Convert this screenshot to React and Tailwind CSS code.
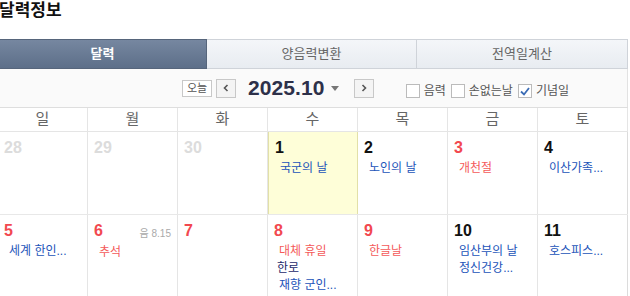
import React from "react";

const font = "font-['Liberation_Sans','Noto_Sans_CJK_KR',sans-serif]";

const weekdays = ["일", "월", "화", "수", "목", "금", "토"];

const weeks = [
  [
    { day: 28, muted: true },
    { day: 29, muted: true },
    { day: 30, muted: true },
    { day: 1, today: true, events: [{ text: "국군의 날" }] },
    { day: 2, events: [{ text: "노인의 날" }] },
    { day: 3, red: true, events: [{ text: "개천절", red: true }] },
    { day: 4, events: [{ text: "이산가족..." }] },
  ],
  [
    { day: 5, red: true, events: [{ text: "세계 한인..." }] },
    { day: 6, red: true, lunar: "8.15", events: [{ text: "추석", red: true }] },
    { day: 7, red: true },
    {
      day: 8,
      red: true,
      events: [
        { text: "대체 휴일", red: true },
        { text: "한로", plain: true },
        { text: "재향 군인..." },
      ],
    },
    { day: 9, red: true, events: [{ text: "한글날", red: true }] },
    { day: 10, events: [{ text: "임산부의 날" }, { text: "정신건강..." }] },
    { day: 11, events: [{ text: "호스피스..." }] },
  ],
];

function Checkbox({ label, checked }) {
  return (
    <label className="flex items-center gap-[4px] text-[12px] text-[#555]">
      <span className="flex h-[14px] w-[14px] items-center justify-center border border-[#bbb] bg-white">
        {checked && (
          <svg width="10" height="9" viewBox="0 0 10 9">
            <path d="M1 4.5 L4 7.5 L9 1" fill="none" stroke="#3b6cb5" strokeWidth="1.8" />
          </svg>
        )}
      </span>
      {label}
    </label>
  );
}

function DayCell({ cell, last }) {
  const numColor = cell.muted
    ? "text-[#dcdcdc]"
    : cell.red
    ? "text-[#f2484f]"
    : "text-[#111]";
  return (
    <div
      className={`h-[82px] border-r border-[#e5e5e5] pl-[6px] pt-[7px] ${
        cell.today ? "bg-[#fefed8] border-l border-l-[#e2e0a8] border-r-[#e2e0a8]" : ""
      } ${last ? "border-r-[#dcdcdc]" : ""}`}
    >
      <div className="flex items-start justify-between pr-[6px]">
        <span className={`text-[16px] font-bold leading-[18px] ${numColor}`}>{cell.day}</span>
        {cell.lunar && (
          <span className="mt-[4px] text-[10px] text-[#aaa]">
            음 <span className="text-[10px]">{cell.lunar}</span>
          </span>
        )}
      </div>
      <div className="mt-[3px] flex flex-col">
        {cell.events?.map((e, i) => (
          <span
            key={i}
            className={`text-[12px] leading-[17px] ${
              e.plain ? "pl-[3px]" : "pl-[5px]"
            } ${e.red ? "text-[#f45a5a]" : e.plain ? "text-[#1d2a6b]" : "text-[#2253b9]"}`}
          >
            {e.text}
          </span>
        ))}
      </div>
    </div>
  );
}

export default function App() {
  return (
    <div className={`h-[296px] w-[630px] overflow-hidden bg-white ${font}`}>
      <div className="ml-[-2px] w-[630px]">
        <h1 className="ml-[1px] pt-[1px] text-[17px] font-bold leading-[20px] text-[#111]">달력정보</h1>

        <div className="mt-[18px] flex h-[30px] w-[630px] border-r border-[#cfd3d9]">
          <div className="flex w-[209px] items-center justify-center border border-[#56657b] bg-gradient-to-b from-[#7687a0] to-[#5d6f89] text-[13px] font-bold text-white">
            달력
          </div>
          <div className="flex w-[210px] items-center justify-center border-y border-r border-[#cfd3d9] bg-gradient-to-b from-[#f4f6f9] to-[#e8ecf1] text-[13px] text-[#666]">
            양음력변환
          </div>
          <div className="flex flex-1 items-center justify-center border-y border-[#cfd3d9] bg-gradient-to-b from-[#f4f6f9] to-[#e8ecf1] text-[13px] text-[#666]">
            전역일계산
          </div>
        </div>

        <div className="flex h-[38px] w-[630px] items-center border-r border-[#e2e2e2] bg-[#fafafa] pl-[184px]">
          <button className="h-[17px] w-[30px] border border-[#c8c8c8] bg-white text-[11px] leading-[15px] text-[#555]">
            오늘
          </button>
          <button className="ml-[4px] flex h-[19px] w-[20px] items-center justify-center border border-[#c8c8c8] bg-[#f4f4f4]">
            <svg width="6" height="8" viewBox="0 0 6 8">
              <path d="M4.5 1 L1.5 4 L4.5 7" fill="none" stroke="#555" strokeWidth="1.6" />
            </svg>
          </button>
          <span className="ml-[12px] text-[21px] font-bold tracking-[0.1px] text-[#2d3049]">2025.10</span>
          <svg className="ml-[6px]" width="8" height="5" viewBox="0 0 8 5">
            <path d="M0 0 H8 L4 5 Z" fill="#777" />
          </svg>
          <button className="ml-[15px] flex h-[19px] w-[20px] items-center justify-center border border-[#c8c8c8] bg-[#f4f4f4]">
            <svg width="6" height="8" viewBox="0 0 6 8">
              <path d="M1.5 1 L4.5 4 L1.5 7" fill="none" stroke="#555" strokeWidth="1.6" />
            </svg>
          </button>
          <div className="ml-[32px] mt-[6px] flex items-center gap-[5px]">
            <Checkbox label="음력" />
            <Checkbox label="손없는날" />
            <Checkbox label="기념일" checked />
          </div>
        </div>

        <div className="w-[630px] border-t border-[#dedede]">
          <div className="grid h-[24px] grid-cols-7 border-b border-[#e5e5e5]">
            {weekdays.map((w) => (
              <div
                key={w}
                className="flex items-center justify-center border-r border-[#e5e5e5] text-[15px] text-[#666]"
              >
                {w}
              </div>
            ))}
          </div>
          {weeks.map((week, wi) => (
            <div key={wi} className="grid grid-cols-7 border-b border-[#e8e8e8]">
              {week.map((cell, ci) => (
                <DayCell key={ci} cell={cell} last={ci === 6} />
              ))}
            </div>
          ))}
        </div>
      </div>
    </div>
  );
}
